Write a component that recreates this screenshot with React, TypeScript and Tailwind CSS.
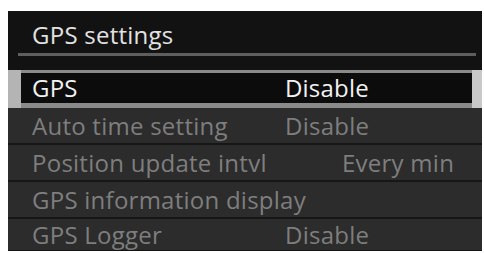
import React from "react";

const rows = [
  { label: "Auto time setting", value: "Disable", left: "left-[277px]", h: "h-[35px]" },
  { label: "Position update intvl", value: "Every min", left: "left-[334px]", h: "h-[37px]" },
  { label: "GPS information display", value: "", left: "left-[277px]", h: "h-[37px]" },
  { label: "GPS Logger", value: "Disable", left: "left-[277px]", h: "h-[33px]" },
];

export default function App() {
  return (
    <div
      className="w-[484px] h-[253px] bg-white pl-[8px] pt-[11px]"
      style={{ fontFamily: '"Open Sans", "DejaVu Sans", sans-serif' }}
    >
      <div className="w-[474px] h-[240px] bg-[#121212] flex flex-col">
        <div className="h-[59px] flex flex-col">
          <div className="h-[42px] flex items-center pl-[24px] text-[24px] tracking-[0.25px] leading-none text-[#e2e2e2] pt-[6px]">
            GPS settings
          </div>
          <div className="h-[3px] ml-[10px] mr-[6px] bg-[#5e5e5e]" />
        </div>
        <div className="h-[38px] bg-[#8a8a8a] flex">
          <div className="w-[13px] bg-[#b4b4b4]" />
          <div className="flex-1 mt-[3px] mb-[5px] bg-[#0c0c0c] flex items-center text-[24px] tracking-[0.2px] leading-none text-[#f2f2f2]">
            <span className="w-[264px] pl-[11px] shrink-0">GPS</span>
            <span>Disable</span>
          </div>
          <div className="w-[10px] bg-[#c8c8c8]" />
        </div>
        {rows.map((r, i) => (
          <div
            key={r.label}
            className={`${r.h} bg-[#2c2c2c] ${i > 0 ? "border-t-2 border-[#161616]" : ""} relative flex items-center text-[24px] tracking-[0.25px] leading-none text-[#7e7e7e]`}
          >
            <span className="absolute left-[24px] whitespace-nowrap">{r.label}</span>
            {r.value && <span className={`absolute whitespace-nowrap ${r.left}`}>{r.value}</span>}
          </div>
        ))}
      </div>
    </div>
  );
}
